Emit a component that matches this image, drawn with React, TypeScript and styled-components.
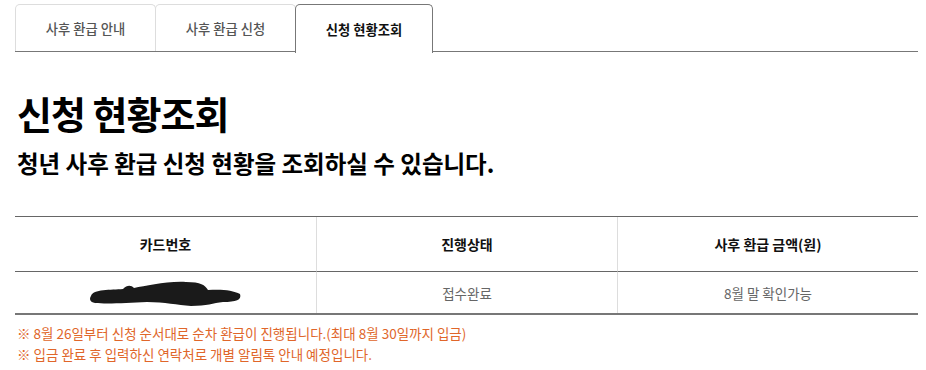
import React from "react";
import styled, { createGlobalStyle } from "styled-components";

const GlobalStyle = createGlobalStyle`
	body {
		margin: 0;
		background: #fff;
		font-family: "Noto Sans CJK KR", "Noto Sans", sans-serif;
		color: #111;
	}
`;

const Page = styled.div`
	width: 903px;
	padding: 4px 8px 0 15px;
`;

const TabBar = styled.div`
	display: flex;
	border-bottom: 1px solid #777;
	height: 47px;
`;

const Tab = styled.div<{ $active?: boolean }>`
	display: flex;
	align-items: center;
	justify-content: center;
	width: ${(p) => (p.$active ? "136px" : "139px")};
	height: ${(p) => (p.$active ? "48px" : "46px")};
	margin-left: -1px;
	border: 1px solid ${(p) => (p.$active ? "#777" : "#ddd")};
	border-bottom: none;
	border-radius: 5px 5px 0 0;
	background: #fff;
	font-size: 13.3px;
	font-weight: ${(p) => (p.$active ? 700 : 500)};
	color: ${(p) => (p.$active ? "#111" : "#555")};
	&:first-child {
		margin-left: 0;
	}
`;

const Title = styled.h1`
	margin: 38px 0 0 2px;
	font-size: 38px;
	font-weight: 700;
	line-height: 46px;
	letter-spacing: -1px;
	color: #000;
`;

const Subtitle = styled.h2`
	margin: 11px 0 0 2px;
	font-size: 23.5px;
	font-weight: 700;
	line-height: 33px;
	color: #000;
`;

const Table = styled.div`
	margin-top: 36px;
	display: grid;
	grid-template-columns: repeat(3, 1fr);
	border-top: 1px solid #666;
	border-bottom: 2px solid #777;
`;

const HeadCell = styled.div`
	height: 54px;
	display: flex;
	align-items: center;
	justify-content: center;
	font-size: 14px;
	font-weight: 700;
	color: #111;
	border-bottom: 1px solid #666;
	border-left: 1px solid #ddd;
	&:first-child {
		border-left: none;
	}
`;

const BodyCell = styled.div<{ $first?: boolean }>`
	height: 41px;
	display: flex;
	align-items: center;
	justify-content: center;
	font-size: 13.5px;
	color: #666;
	border-left: ${(p) => (p.$first ? "none" : "1px solid #ddd")};
`;

const Notes = styled.ul`
	list-style: none;
	margin: 8px 0 0 2px;
	padding: 0;
`;

const Note = styled.li`
	font-size: 13.5px;
	line-height: 21px;
	color: #e0662a;
`;

const Redacted = () => (
	<svg width="154" height="28" viewBox="0 0 154 28">
		<path
			d="M2 17 C 4 10, 22 11, 34 10 C 38 6, 42 6, 45 9 C 57 7, 77 2, 97 3 C 112 3, 116 6, 119 11 C 132 10, 144 11, 151 15 C 153 21, 147 23, 134 23 C 124 24, 118 27, 102 27 C 88 26, 76 23, 58 23 C 38 24, 18 25, 6 24 C 1 23, 0 20, 2 17 Z"
			fill="#1a1a1a"
		/>
	</svg>
);

export default function App() {
	return (
		<>
			<GlobalStyle />
			<Page>
				<TabBar>
					<Tab>사후 환급 안내</Tab>
					<Tab>사후 환급 신청</Tab>
					<Tab $active>신청 현황조회</Tab>
				</TabBar>
				<Title>신청 현황조회</Title>
				<Subtitle>청년 사후 환급 신청 현황을 조회하실 수 있습니다.</Subtitle>
				<Table>
					<HeadCell>카드번호</HeadCell>
					<HeadCell>진행상태</HeadCell>
					<HeadCell>사후 환급 금액(원)</HeadCell>
					<BodyCell $first>
						<Redacted />
					</BodyCell>
					<BodyCell>접수완료</BodyCell>
					<BodyCell>8월 말 확인가능</BodyCell>
				</Table>
				<Notes>
					<Note>※ 8월 26일부터 신청 순서대로 순차 환급이 진행됩니다.(최대 8월 30일까지 입금)</Note>
					<Note>※ 입금 완료 후 입력하신 연락처로 개별 알림톡 안내 예정입니다.</Note>
				</Notes>
			</Page>
		</>
	);
}
